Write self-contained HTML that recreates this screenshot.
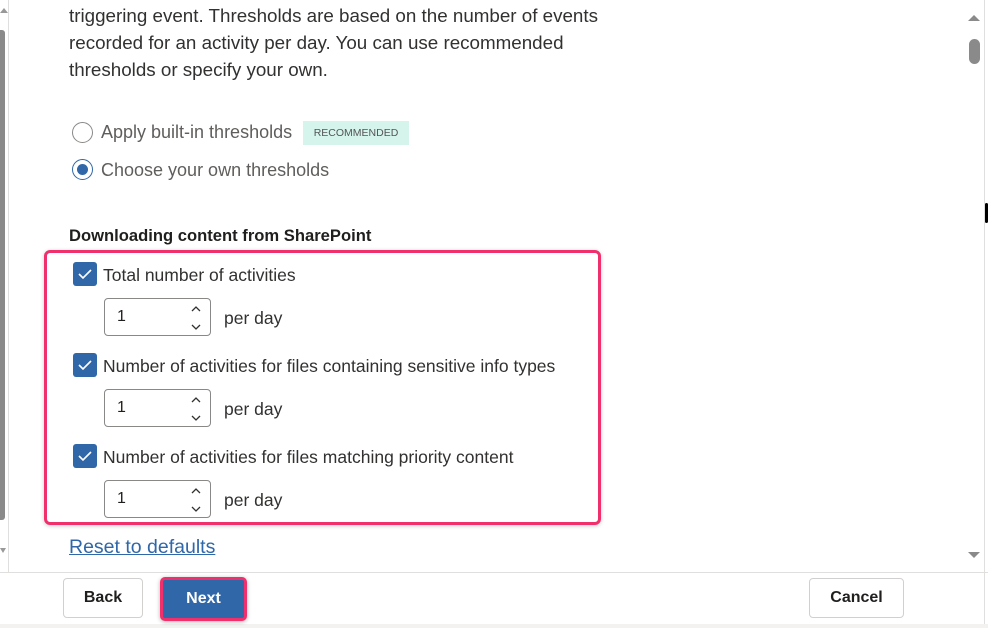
<!DOCTYPE html>
<html><head><style>
*{margin:0;padding:0;box-sizing:border-box}
body{width:988px;height:628px;overflow:hidden;background:#fff;font-family:"Liberation Sans",sans-serif;color:#323130;position:relative}
.a{position:absolute}
.t{font-size:17.5px;white-space:nowrap}
.cb{position:absolute;width:24px;height:24px;background:#2f67a8;border-radius:3px}
.cb svg{position:absolute;left:4px;top:5px}
.sp{position:absolute;width:107px;height:38px;border:1px solid #8a8886;border-radius:4px;background:#fff}
.sp span{position:absolute;left:12px;top:9px;font-size:16px;color:#201f1e}
.sp svg{position:absolute;right:8px;top:6px}
.pd{position:absolute;font-size:17.5px}
</style></head><body>
<div class="a" style="left:0;top:30px;width:5px;height:490px;background:#8a8a8a;border-radius:0 3px 3px 0"></div>
<div class="a" style="left:8px;top:0;width:1px;height:572px;background:#e1dfdd"></div>
<div class="a" style="left:984px;top:0;width:1px;height:628px;background:#e1dfdd"></div>
<div class="a" style="left:0;top:8px;width:0;height:0;border-left:4px solid transparent;border-right:4px solid transparent;border-bottom:5px solid #999"></div>
<div class="a" style="left:0;top:548px;width:0;height:0;border-left:3px solid transparent;border-right:3px solid transparent;border-top:5px solid #999"></div>
<div class="a" style="left:968px;top:15px;width:0;height:0;border-left:6px solid transparent;border-right:6px solid transparent;border-bottom:6px solid #8a8a8a"></div>
<div class="a" style="left:969px;top:39px;width:11px;height:25px;background:#8a8a8a;border-radius:6px"></div>
<div class="a" style="left:968px;top:552px;width:0;height:0;border-left:6px solid transparent;border-right:6px solid transparent;border-top:6px solid #8a8a8a"></div>
<div class="a" style="left:985px;top:203px;width:3px;height:20px;background:#000;border-radius:2px"></div>

<div class="a t" style="left:69px;top:2px;line-height:27px;font-size:18.8px;color:#323130">triggering event. Thresholds are based on the number of events<br>recorded for an activity per day. You can use recommended<br>thresholds or specify your own.</div>

<div class="a" style="left:72px;top:122px;width:21px;height:21px;border:1.5px solid #8a8886;border-radius:50%"></div>
<div class="a t" style="left:101px;top:122px;color:#605e5c;font-size:18px">Apply built-in thresholds</div>
<div class="a" style="left:303px;top:121px;width:106px;height:24px;background:#d5f4ec;font-size:10.5px;color:#555;text-align:center;line-height:24px">RECOMMENDED</div>
<div class="a" style="left:72px;top:159px;width:21px;height:21px;border:1.5px solid #2f67a8;border-radius:50%"><div style="position:absolute;left:3.5px;top:3.5px;width:11px;height:11px;border-radius:50%;background:#2f67a8"></div></div>
<div class="a t" style="left:101px;top:160px;color:#605e5c;font-size:18px">Choose your own thresholds</div>

<div class="a t" style="left:69px;top:226px;font-weight:bold;font-size:16.6px;color:#201f1e">Downloading content from SharePoint</div>

<div class="a" style="left:44px;top:250px;width:557px;height:275px;border:3px solid #f0306c;border-radius:6px;box-shadow:0 1px 4px rgba(0,0,0,.2)"></div>

<div class="cb" style="left:73px;top:262px"><svg width="16" height="14"><path d="M2 7 L6 11 L14 3" fill="none" stroke="#fff" stroke-width="1.6"/></svg></div>
<div class="a t" style="left:103px;top:265px">Total number of activities</div>
<div class="sp" style="left:104px;top:298px"><span>1</span><svg width="12" height="26"><path d="M2 6 L6 2 L10 6 M2 20 L6 24 L10 20" fill="none" stroke="#323130" stroke-width="1.3"/></svg></div>
<div class="pd" style="left:224px;top:308px">per day</div>

<div class="cb" style="left:73px;top:353px"><svg width="16" height="14"><path d="M2 7 L6 11 L14 3" fill="none" stroke="#fff" stroke-width="1.6"/></svg></div>
<div class="a t" style="left:103px;top:356px">Number of activities for files containing sensitive info types</div>
<div class="sp" style="left:104px;top:389px"><span>1</span><svg width="12" height="26"><path d="M2 6 L6 2 L10 6 M2 20 L6 24 L10 20" fill="none" stroke="#323130" stroke-width="1.3"/></svg></div>
<div class="pd" style="left:224px;top:399px">per day</div>

<div class="cb" style="left:73px;top:444px"><svg width="16" height="14"><path d="M2 7 L6 11 L14 3" fill="none" stroke="#fff" stroke-width="1.6"/></svg></div>
<div class="a t" style="left:103px;top:447px">Number of activities for files matching priority content</div>
<div class="sp" style="left:104px;top:480px"><span>1</span><svg width="12" height="26"><path d="M2 6 L6 2 L10 6 M2 20 L6 24 L10 20" fill="none" stroke="#323130" stroke-width="1.3"/></svg></div>
<div class="pd" style="left:224px;top:490px">per day</div>

<div class="a t" style="left:69px;top:536px;color:#2f67a8;text-decoration:underline;font-size:19.5px">Reset to defaults</div>

<div class="a" style="left:0;top:572px;width:988px;height:1px;background:#e1dfdd"></div>
<div class="a" style="left:0;top:624px;width:988px;height:4px;background:#f3f2f1"></div>
<div class="a" style="left:63px;top:578px;width:80px;height:40px;border:1px solid #d2d0ce;border-radius:4px;font-size:16px;font-weight:bold;text-align:center;line-height:38px;color:#201f1e">Back</div>
<div class="a" style="left:160px;top:577px;width:87px;height:44px;border:3px solid #f0306c;border-radius:5px;background:#2f67a8;color:#fff;font-size:16px;font-weight:bold;text-align:center;line-height:38px;box-shadow:0 1px 4px rgba(0,0,0,.3)">Next</div>
<div class="a" style="left:809px;top:578px;width:95px;height:40px;border:1px solid #d2d0ce;border-radius:4px;font-size:16px;font-weight:bold;text-align:center;line-height:38px;color:#201f1e">Cancel</div>
</body></html>
